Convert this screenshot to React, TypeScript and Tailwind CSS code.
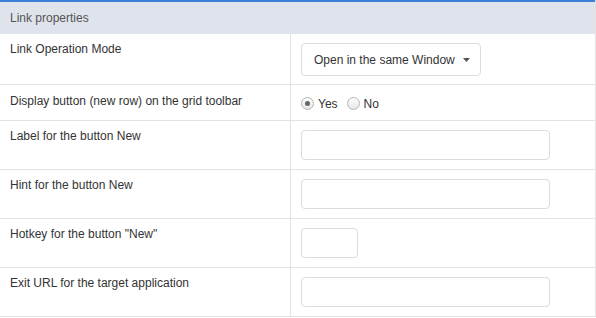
const ROWS = [
  { label: "Label for the button New", width: "w-[249px]" },
  { label: "Hint for the button New", width: "w-[249px]" },
  { label: 'Hotkey for the button "New"', width: "w-[57px]" },
  { label: "Exit URL for the target application", width: "w-[249px]" },
];

function Row({ label, children, cell = "pt-[9px] pb-[9px]" }: { label: string; children: React.ReactNode; cell?: string }) {
  return (
    <div className="flex border-b border-[#e3e3e3]">
      <div className="w-[291px] shrink-0 border-r border-[#e3e3e3] pl-[10px] pt-[7px] leading-[17px] text-[#333]">
        {label}
      </div>
      <div className={`flex-1 pl-[10px] ${cell}`}>{children}</div>
    </div>
  );
}

function Radio({ checked, label }: { checked?: boolean; label: string }) {
  return (
    <span className="flex items-center gap-[4px]">
      <span className="flex h-[13px] w-[13px] items-center justify-center rounded-full border border-[#b5b5b5] bg-gradient-to-b from-[#fdfdfd] to-[#e6e6e6]">
        {checked && <span className="h-[5px] w-[5px] rounded-full bg-[#666]" />}
      </span>
      <span className="text-[#333]">{label}</span>
    </span>
  );
}

export default function App() {
  return (
    <div className="h-[318px] w-[596px] bg-white font-['Liberation_Sans',Arial,sans-serif] text-[12px]">
      <div className="border-r border-[#e3e3e3] w-[596px]">
        <div className="border-t-2 border-[#3d7fd6] bg-[#dfe3eb] pl-[10px] pt-[1px] leading-[31px] text-[#555]">
          Link properties
        </div>
        <Row label="Link Operation Mode" cell="pt-[9px] pb-[8px]">
          <div className="flex h-[33px] w-[180px] items-center justify-between rounded-[4px] border border-[#dcdcdc] pl-[12px] pr-[10px] text-[#333]">
            <span>Open in the same Window</span>
            <svg width="7" height="4" viewBox="0 0 7 4">
              <path d="M0 0h7L3.5 4z" fill="#555" />
            </svg>
          </div>
        </Row>
        <div className="flex border-b border-[#e3e3e3]">
          <div className="w-[291px] shrink-0 border-r border-[#e3e3e3] pl-[10px] pt-[8px] pb-[10px] leading-[17px] text-[#333]">
            Display button (new row) on the grid toolbar
          </div>
          <div className="flex flex-1 items-center gap-[9px] pl-[10px] pt-[2px]">
            <Radio checked label="Yes" />
            <Radio label="No" />
          </div>
        </div>
        {ROWS.map((r) => (
          <Row key={r.label} label={r.label}>
            <div className={`h-[30px] rounded-[4px] border border-[#dcdcdc] ${r.width}`} />
          </Row>
        ))}
      </div>
    </div>
  );
}
